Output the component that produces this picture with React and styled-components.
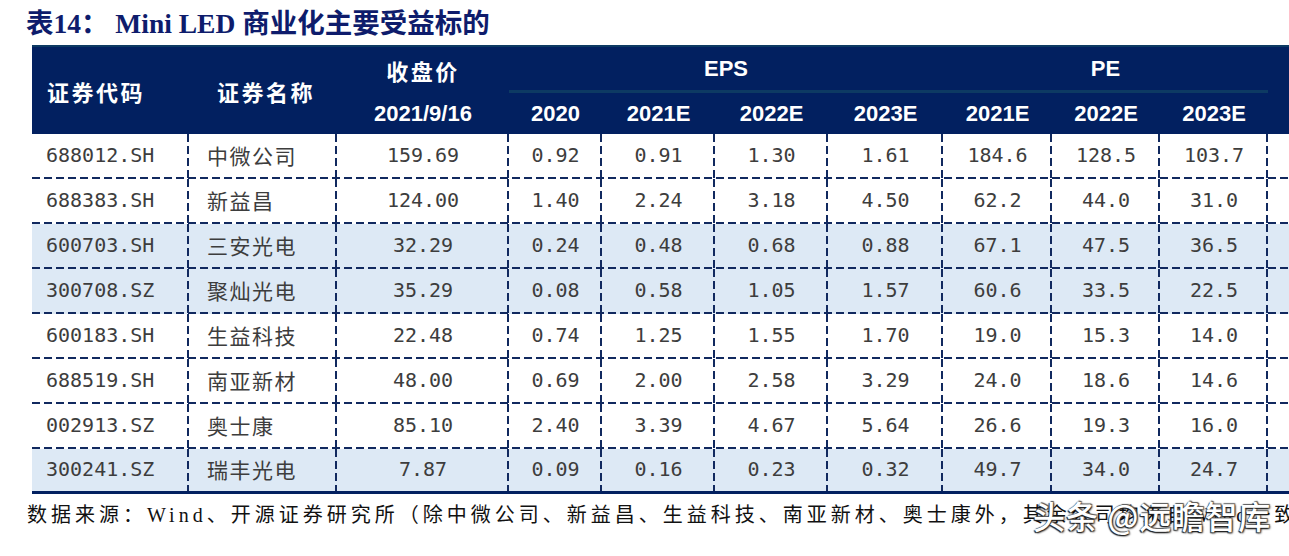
import React from 'react';
import styled, { createGlobalStyle } from 'styled-components';

const COLS = '157px 148px 172px 93px 113px 113px 115px 109px 108px 108px 120px';
const NAVY = '#022060';
const RULE = '#0d3a63';
const DASH = '#11295f';
const SHADE = '#dde9f5';

const rows = [
  { code: '688012.SH', name: '中微公司', price: '159.69', eps: ['0.92', '0.91', '1.30', '1.61'], pe: ['184.6', '128.5', '103.7'] },
  { code: '688383.SH', name: '新益昌', price: '124.00', eps: ['1.40', '2.24', '3.18', '4.50'], pe: ['62.2', '44.0', '31.0'] },
  { code: '600703.SH', name: '三安光电', price: '32.29', eps: ['0.24', '0.48', '0.68', '0.88'], pe: ['67.1', '47.5', '36.5'], shade: true },
  { code: '300708.SZ', name: '聚灿光电', price: '35.29', eps: ['0.08', '0.58', '1.05', '1.57'], pe: ['60.6', '33.5', '22.5'], shade: true },
  { code: '600183.SH', name: '生益科技', price: '22.48', eps: ['0.74', '1.25', '1.55', '1.70'], pe: ['19.0', '15.3', '14.0'] },
  { code: '688519.SH', name: '南亚新材', price: '48.00', eps: ['0.69', '2.00', '2.58', '3.29'], pe: ['24.0', '18.6', '14.6'] },
  { code: '002913.SZ', name: '奥士康', price: '85.10', eps: ['2.40', '3.39', '4.67', '5.64'], pe: ['26.6', '19.3', '16.0'] },
  { code: '300241.SZ', name: '瑞丰光电', price: '7.87', eps: ['0.09', '0.16', '0.23', '0.32'], pe: ['49.7', '34.0', '24.7'], shade: true },
];

const years = ['2020', '2021E', '2022E', '2023E', '2021E', '2022E', '2023E'];

const GlobalStyle = createGlobalStyle`
  html, body {
    margin: 0;
    padding: 0;
    background: #fff;
  }
  body {
    width: 1289px;
    height: 556px;
    overflow: hidden;
  }
`;

const Page = styled.div`
  position: relative;
  width: 1289px;
  height: 556px;
  overflow: hidden;
  font-family: "Liberation Serif", "Noto Sans CJK SC", serif;
`;

const Title = styled.h1`
  margin: 0;
  height: 45px;
  box-sizing: border-box;
  padding: 7px 0 0 26px;
  font-size: 27.5px;
  line-height: 34px;
  font-weight: 700;
  color: #0e1c6c;
  white-space: nowrap;
`;

const Table = styled.div`
  margin-left: 32px;
  width: max-content;
`;

const Head = styled.div`
  display: grid;
  grid-template-columns: ${COLS};
  grid-template-rows: 46px 41px;
  background: ${NAVY};
  border-top: 2px solid ${RULE};
  color: #fff;
`;

const HeadCell = styled.div`
  grid-column: ${p => p.$col};
  grid-row: ${p => p.$row};
  display: flex;
  align-items: center;
  justify-content: ${p => (p.$left ? 'flex-start' : 'center')};
  padding-left: ${p => p.$pad || 0}px;
  font-family: ${p => (p.$cjk ? '"Noto Sans CJK SC", sans-serif' : '"Liberation Sans", Arial, sans-serif')};
  font-size: 22px;
  font-weight: 700;
  letter-spacing: ${p => (p.$cjk ? '2.5px' : '0')};
  border-bottom: ${p => (p.$group ? `3px solid ${RULE}` : 'none')};
  white-space: nowrap;
`;

const Row = styled.div`
  display: grid;
  grid-template-columns: ${COLS};
  height: 45px;
  box-sizing: border-box;
  background-color: ${p => (p.$shade ? SHADE : '#fff')};
  background-image: ${p => (p.$last ? 'none' : `linear-gradient(to right, ${DASH} 8px, transparent 8px)`)};
  background-size: 12px 2px;
  background-repeat: repeat-x;
  background-position: left bottom;
  border-bottom: ${p => (p.$last ? `3px solid ${NAVY}` : 'none')};
`;

const Cell = styled.div`
  display: flex;
  align-items: center;
  justify-content: ${p => (p.$left ? 'flex-start' : 'center')};
  padding-left: ${p => p.$pad || 0}px;
  padding-bottom: 3px;
  font-family: ${p => (p.$cjk ? '"Noto Sans CJK SC", sans-serif' : '"DejaVu Sans Mono", monospace')};
  font-size: ${p => (p.$cjk ? '21px' : '20px')};
  letter-spacing: ${p => (p.$cjk ? '1.5px' : '0')};
  color: #3d3d3d;
  white-space: nowrap;
  background-image: ${p => (p.$open ? 'none' : `linear-gradient(to bottom, ${DASH} 8px, transparent 8px)`)};
  background-size: 2px 12px;
  background-repeat: repeat-y;
  background-position: right top;
`;

const Source = styled.p`
  margin: 9px 0 0 27px;
  font-size: 20px;
  line-height: 24px;
  letter-spacing: 4px;
  color: #111;
  white-space: nowrap;
`;

const Watermark = styled.div`
  position: absolute;
  left: 1033px;
  top: 495px;
  font-family: "Noto Sans CJK SC", sans-serif;
  font-size: 32px;
  font-weight: 500;
  line-height: 40px;
  letter-spacing: 1px;
  color: #fff;
  white-space: nowrap;
  text-shadow: -1px 1px 1px #222, 1px -1px 1px #555, 1px 1px 2px #000;
`;

export default function App() {
  return (
    <Page>
      <GlobalStyle />
      <Title>表14： Mini LED 商业化主要受益标的</Title>
      <Table>
        <Head>
          <HeadCell $col="1" $row="1 / 3" $cjk $left $pad={15}>证券代码</HeadCell>
          <HeadCell $col="2" $row="1 / 3" $cjk $left $pad={28}>证券名称</HeadCell>
          <HeadCell $col="3" $row="1" $cjk>收盘价</HeadCell>
          <HeadCell $col="3" $row="2">2021/9/16</HeadCell>
          <HeadCell $col="4 / 8" $row="1" $group>EPS</HeadCell>
          <HeadCell $col="8 / 11" $row="1" $group>PE</HeadCell>
          {years.map((y, i) => (
            <HeadCell key={i} $col={`${i + 4}`} $row="2">{y}</HeadCell>
          ))}
        </Head>
        {rows.map((r, i) => (
          <Row key={r.code} $shade={r.shade} $last={i === rows.length - 1}>
            <Cell $left $pad={14}>{r.code}</Cell>
            <Cell $left $pad={18} $cjk>{r.name}</Cell>
            <Cell>{r.price}</Cell>
            {r.eps.map((v, j) => <Cell key={`e${j}`}>{v}</Cell>)}
            {r.pe.map((v, j) => <Cell key={`p${j}`}>{v}</Cell>)}
            <Cell $open />
          </Row>
        ))}
      </Table>
      <Source>
        数据来源：Wind、开源证券研究所（除中微公司、新益昌、生益科技、南亚新材、奥士康外，其余公司均来自Wind一致预期）
      </Source>
      <Watermark>头条 @远瞻智库</Watermark>
    </Page>
  );
}
